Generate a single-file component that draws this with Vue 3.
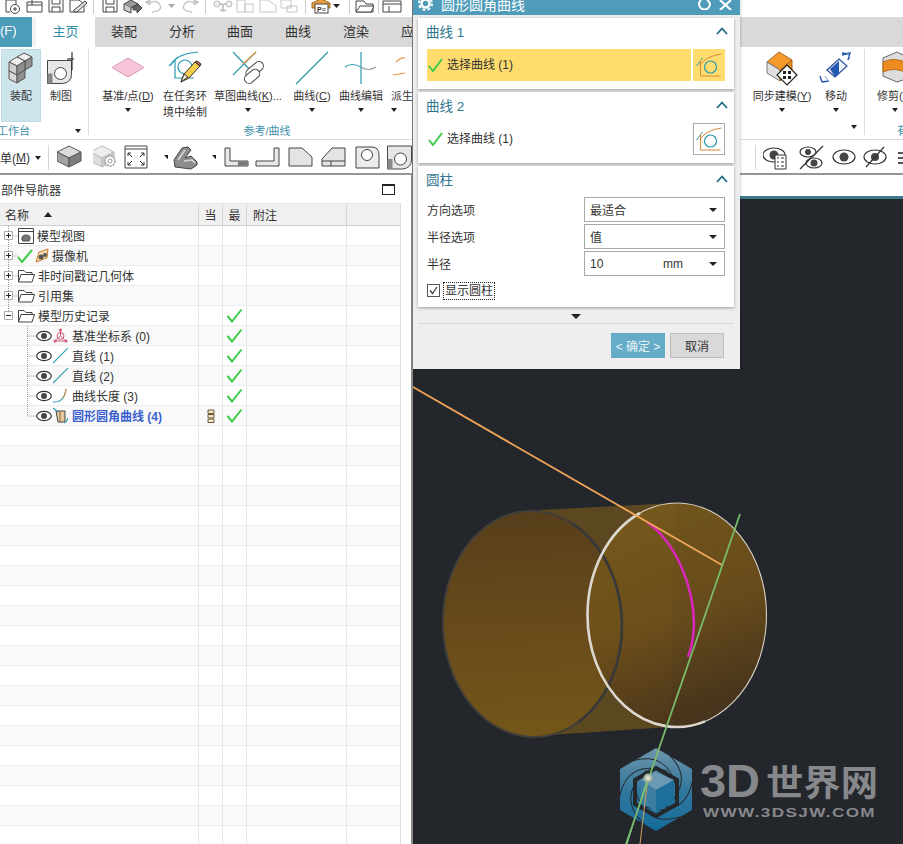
<script setup>
const s = (d, fill = 'none', stroke = '#444', w = 1) =>
  `<path d="${d}" fill="${fill}" stroke="${stroke}" stroke-width="${w}"/>`

const cubeIcon = (cx, cy, l, r, t, st = '#555') =>
  s(`M${cx} ${cy - 10}l12 6-12 6-12-6z`, t, st) +
  s(`M${cx - 12} ${cy - 4}l12 6v9l-12-6z`, l, st) +
  s(`M${cx + 12} ${cy - 4}l-12 6v9l12-6z`, r, st)

const sketchIcon = (ox, oy, teal = '#2a9bb0', orange = '#d98a3a') =>
  s(`M${ox + 3} ${oy + 12}Q${ox + 9} ${oy + 2} ${ox + 25} ${oy}`, 'none', orange, 1) +
  s(`M${ox} ${oy + 12}L${ox + 6} ${oy + 4}`, 'none', teal, 1) +
  s(`M${ox + 4} ${oy + 6}V${oy + 22}H${ox + 24}`, 'none', orange, 1) +
  `<circle cx="${ox + 14}" cy="${oy + 13}" r="6" fill="none" stroke="${teal}" stroke-width="1.2"/>`

const eye = (cx, cy, rx = 11, ry = 7, r = 4) =>
  `<ellipse cx="${cx}" cy="${cy}" rx="${rx}" ry="${ry}" fill="#fff" stroke="#333" stroke-width="1.2"/><circle cx="${cx}" cy="${cy}" r="${r}" fill="#444"/>`

const drawingIcon = (x, y) =>
  s(`M${x} ${y}H${x + 24}V${y + 14}Q${x + 24} ${y + 22} ${x + 15} ${y + 23}H${x}Z`, '#e6e6e6', '#444') +
  `<rect x="${x}" y="${y + 13}" width="5" height="10" fill="#888"/><circle cx="${x + 13}" cy="${y + 13}" r="6" fill="#fff" stroke="#444"/>`

const qatIcons = [
  { c: 13, svg: s('M6 2H16V9M6 2V14H10', 'none') + '<circle cx="15" cy="11" r="4.5" fill="#fff" stroke="#444"/>' + s('M13 11h4M15 9v4') },
  { c: 33, svg: s('M5 4H20V14H5ZM5 7H20M10 2V7') },
  { c: 56, svg: s('M5 1H19V14H5ZM8 1V6H16V1M8 14V9H16V14') },
  { c: 78, svg: s('M5 2H14L19 6V14H5Z') + s('M9 12L20 3l2 2-10 9H9Z', '#ddd') },
  { c: 94, sep: true },
  { c: 106, svg: s('M5 1H19V14H5ZM8 1V6H16V1M8 14V9H16V14') },
  { c: 133, svg: s('M4 6L11 2l7 4-7 4z', '#999') + s('M4 6v6l7 3V10M18 6v4', '#ccc') + s('M13 8h4V5l5 5-5 5v-3h-4z', '#666') },
  { c: 155, svg: s('M7 5Q15 1 18 7T10 14', 'none', '#c6c6c6', 1.4) + s('M3 4l5-2v5z', '#c6c6c6', '#c6c6c6') },
  { c: 173, svg: '<path d="M7 6h7l-3.500 4z" fill="#aaa"/>', w: 12 },
  { c: 191, svg: s('M17 5Q9 1 6 7T14 14', 'none', '#c6c6c6', 1.4) + s('M21 4l-5-2v5z', '#c6c6c6', '#c6c6c6') },
  { c: 206, sep: true },
  { c: 220, svg: s('M12 7L6 4M12 7l6-3M12 7v6M9 12l3 1 3-1', 'none', '#bbb', 1.5) + '<circle cx="6" cy="6" r="3" fill="#eee" stroke="#bbb"/><circle cx="18" cy="6" r="3" fill="#eee" stroke="#bbb"/>' },
  { c: 245, svg: s('M4 2H12V14H4ZM12 6H20V14H12Z', '#fff', '#c4c4c4') },
  { c: 268, svg: s('M4 2H12L20 8V14H4Z', '#fff', '#c4c4c4') },
  { c: 292, svg: s('M4 2H14V10H4ZM10 8H20V14H10Z', '#fff', '#c4c4c4') },
  { c: 304, sep: true },
  { c: 321, svg: s('M3 5L12 1l9 4v5H3Z', '#f0a03c', '#a06a28') + '<rect x="6" y="6" width="13" height="9" fill="#fff" stroke="#444"/><text x="8" y="13.500" font-size="7" font-family="Liberation Sans" font-weight="700" fill="#333">P≡</text>' },
  { c: 338, svg: '<path d="M8 6h7l-3.500 4z" fill="#222"/>', w: 12 },
  { c: 349, sep: true },
  { c: 363, svg: s('M4 3H12L14 6H21V14H4Z') + s('M4 14L8 8H22L19 14Z', '#fff') },
  { c: 379, sep: true },
  { c: 392, svg: s('M3 3H21V14H3ZM3 6H21M9 8v6', '#fff') }
]

const toolIcons = [
  { c: 73, svg: cubeIcon(12, 11, '#a2a2a2', '#7d7d7d', '#dcdcdc') },
  { c: 105, svg: cubeIcon(9, 11, '#dddddd', '#cccccc', '#eeeeee', '#bbb') + '<circle cx="17" cy="16" r="5" fill="#fff" stroke="#999" stroke-width="1.500" stroke-dasharray="2 1"/><circle cx="17" cy="16" r="2" fill="#fff" stroke="#999"/>' },
  { c: 139, svg: s('M1 1H23V23H1ZM1 4H23') + s('M4 8l4 4M4 8h3M4 8v3M20 8l-4 4M20 8h-3M20 8v3M4 20l4-4M4 20h3M4 20v-3M20 20l-4-4M20 20h-3M20 20v-3', 'none', '#333') },
  { c: 162, svg: '<path d="M8 10h7l-3.500 4z" fill="#222"/>', w: 12 },
  { c: 185, svg: s('M1 15L9 3l6-1 3 3-6 8 6-2 6 6v3l-6 4-16-2Z', '#8c8c8c', '#444') + s('M5 15L12 5M11 16l8-1 3 3', 'none', '#d8d8d8', 1.6) },
  { c: 209, svg: '<path d="M8 10h7l-3.500 4z" fill="#222"/>', w: 12 },
  { c: 235, svg: s('M1 3H6V16H24V21H1Z', '#e8e8e8') + '<rect x="14" y="16.500" width="9.500" height="4" fill="#777"/>' },
  { c: 267, svg: s('M1 16H19V3H24V21H1Z', '#e8e8e8') },
  { c: 301, svg: s('M1 3H14L24 12V21H1Z', '#e4e4e4') },
  { c: 333, svg: s('M1 21V14L11 3H24V21ZM1 16H24M10 16V21', '#e4e4e4') },
  { c: 368, svg: s('M1 2H17Q24 2 24 10V23H1Z', '#ececec') + '<circle cx="12" cy="10" r="5.500" fill="#fff" stroke="#444"/>' },
  { c: 400, svg: drawingIcon(0.5, 1), w: 26 },
  { c: 776, svg: eye(11, 10, 11, 7, 4.500) + s('M12 10H23V24H12Z', '#fff', '#333') + s('M14 13h2M18 13h3M14 17h2M18 17h3M14 21h2M18 21h3', 'none', '#333') },
  { c: 808, svg: eye(9, 7, 8, 5, 3) + eye(15, 18, 8, 5, 3.500) + s('M1 24L24 1', 'none', '#333', 1.2) },
  { c: 842, svg: eye(12, 12, 11, 7, 4.500) },
  { c: 874, svg: eye(12, 12, 11, 7, 4) + s('M3 22L21 2', 'none', '#333', 1.2) },
  { c: 900, svg: s('M0 8H12M0 13H12M0 18H12', 'none', '#555', 2), w: 10 }
]

const withWidths = (items, start = 0) =>
  items.map((it, i) => {
    const prev = i === 0 ? start : (items[i - 1].c + it.c) / 2
    const next = i === items.length - 1 ? it.c + (it.c - prev) : (it.c + items[i + 1].c) / 2
    return { ...it, width: next - prev }
  })
const qatSlots = withWidths(qatIcons)
const toolLeft = withWidths(toolIcons.slice(0, 12), 49)
const toolRight = withWidths(toolIcons.slice(12), 753)

const tabs = ['装配', '分析', '曲面', '曲线', '渲染']

const icons = {
  assembly: { box: '0 50 40 36', svg:
    s('M16 57l7-4 8 4-7 4z', '#eeeeee', '#555') + s('M24 61l7-4v9l-7 4z', '#8f8f8f', '#555') +
    s('M8 62l8-5 8 4-8 5z', '#eeeeee', '#555') + s('M8 62l8 4v9l-8-4z', '#cfcfcf', '#555') + s('M16 66l8-5v9l-8 5z', '#8f8f8f', '#555') +
    s('M8 71l8 4v8l-8-4z', '#d8d8d8', '#555') + s('M16 75l8-5v8l-8 5z', '#8f8f8f', '#555') },
  drawing: { box: '40 50 40 36', svg:
    drawingIcon(46.500, 60.500) + s('M71 52V70', 'none', '#333', 1.2) + s('M66 59H73', 'none', '#333', 1.2) },
  datum: { box: '110 50 36 36', svg: s('M112 67.500L128 58l16 9.500-16 9.500Z', '#f7c5da', '#d99ab6') },
  task: { box: '165 50 40 36', svg:
    s('M171 65Q176 54 198 52', 'none', '#2a9bb0', 1.2) + s('M169 66L178 57M175 59V78H194', 'none', '#2a9bb0', 1.2) +
    '<circle cx="185" cy="67" r="7" fill="none" stroke="#2a9bb0" stroke-width="1.200"/>' +
    s('M181 82l3-8 11-12 5 4-11 12z', '#f5cc4e', '#333') + s('M195 62l2-1 4 3-1 2z', '#d85a5a', '#333') + s('M181 82l3-8 4 3z', '#f6e7c8', '#333') },
  sketch: { box: '230 50 36 36', svg:
    s('M233 52L254 74M233 75L256 52', 'none', '#2a9bb0', 1.2) + s('M243 64L256 52', 'none', '#e0953f', 1.4) +
    '<rect x="245" y="65" width="20" height="9" rx="4.500" transform="rotate(-40 255 70)" fill="#fff" stroke="#444"/><rect x="244" y="72" width="17" height="9" rx="4.500" transform="rotate(-40 252 77)" fill="#fff" stroke="#444"/>' },
  curve: { box: '294 50 36 36', svg: s('M296 84L328 52', 'none', '#2a9bb0', 1.2) },
  edit: { box: '343 50 36 36', svg: s('M361 52V84', 'none', '#2a9bb0', 1.2) + s('M345 67Q352 62 361 67', 'none', '#2a9bb0', 1.2) + s('M361 67Q368 72 376 67', 'none', '#999', 1.2) },
  derive: { box: '400 50 20 36', svg: s('M405 62Q410 57 414 58', 'none', '#e0953f', 1.2) + s('M402 75L414 73', 'none', '#e0953f', 1.2) },
  sync: { box: '764 50 36 36', svg:
    s('M767 62l12-10 13 8-12 10z', '#f39a2a', '#a8641e') + s('M767 62l13 8v11l-13-8z', '#e0e0e0', '#777') + s('M780 70l12-10v11l-12 10z', '#ed8a1d', '#a8641e') +
    s('M787 65l10 10-10 10-10-10z', '#fff', '#222', 1.2) + '<path d="M783 71h3v3h-3zM788 71h3v3h-3zM783 76h3v3h-3zM788 76h3v3h-3z" fill="#222"/>' },
  move: { box: '818 50 36 36', svg:
    s('M827 70l12-11 8 7-12 11z', '#eef3fb', '#2a4f9c', 1.2) + s('M830 69l9-8v13l-4 3z', '#2458b2', 'none') +
    s('M842 55l8-2-2 7M848 54l-6-1', 'none', '#2458b2', 1.4) + s('M822 82l-2-6M822 82l7-1', 'none', '#2458b2', 1.4) + s('M847 52l3 7M825 76l4 6', 'none', '#7f9fd2', 1) },
  trim: { box: '875 50 36 36', svg:
    s('M881 58l14-6 12 6v20l-12 4-14-6Z', '#ddd', '#666') + s('M881 62Q893 56 907 64V74Q893 66 881 72Z', '#ee8c20', '#b66c1e') }
}

const group1 = [
  { w: 40, icon: 'assembly', lines: ['装配'], active: true },
  { w: 40, icon: 'drawing', lines: ['制图'] }
]
const group2 = [
  { w: 62, icon: 'datum', lines: ['基准/点(', 'D', ')'], caret: true },
  { w: 52, icon: 'task', lines: ['在任务环'], second: '境中绘制' },
  { w: 74, icon: 'sketch', lines: ['草图曲线(', 'K', ')...'], caret: true },
  { w: 54, icon: 'curve', lines: ['曲线(', 'C', ')'], caret: true },
  { w: 44, icon: 'edit', lines: ['曲线编辑'], caret: true },
  { w: 40, icon: 'derive', lines: ['派生曲线'], caret: true, start: true }
]
const group3 = [
  { w: 64, icon: 'sync', lines: ['同步建模(', 'Y', ')'], caret: true },
  { w: 44, icon: 'move', lines: ['移动'], caret: true }
]
const group4 = [{ w: 44, icon: 'trim', lines: ['修剪(', 'T', ')'], caret: true }]

const rows = [
  { name: '模型视图', exp: '+', kind: 'view' },
  { name: '摄像机', exp: '+', kind: 'camera' },
  { name: '非时间戳记几何体', exp: '+', kind: 'folder' },
  { name: '引用集', exp: '+', kind: 'folder' },
  { name: '模型历史记录', exp: '-', kind: 'folder', ok: true },
  { name: '基准坐标系 (0)', kind: 'csys', ok: true },
  { name: '直线 (1)', kind: 'line', ok: true },
  { name: '直线 (2)', kind: 'line', ok: true },
  { name: '曲线长度 (3)', kind: 'length', ok: true },
  { name: '圆形圆角曲线 (4)', kind: 'fillet', ok: true, current: true }
]
const blankRows = Array.from({ length: 21 }, (_, i) => i)

const treeIcons = {
  view: { w: 16, svg: s('M0.500 0.500H15.500V15.500H0.500ZM0.500 3.500H15.500') + s('M4 12Q3 7 8 7t4 4l-1 2H5Z', '#777', '#555') },
  camera: { w: 14, svg: s('M1 14L4 4 13 1 12 10Z', '#f3d7ae', '#c77f2c') + '<circle cx="6" cy="9" r="2.500" fill="#555"/><circle cx="10" cy="7" r="2" fill="#555"/>' },
  folder: { w: 17, svg: s('M0.500 14V2.500H6L8 4.500H14V6.500M0.500 14L3 6.500H16.500L14 14Z', '#fff', '#444') },
  csys: { w: 15, svg: s('M7.500 8V2M7.500 8L2 13M7.500 8L13 13M3 13H12', 'none', '#d25a78', 1) + '<circle cx="7.500" cy="8" r="3.500" fill="none" stroke="#d25a78"/><circle cx="7.500" cy="2" r="1.500" fill="#d25a78"/><circle cx="2" cy="13" r="1.500" fill="#d25a78"/><circle cx="13" cy="13" r="1.500" fill="#d25a78"/>' },
  line: { w: 15, svg: s('M0 15L15 0', 'none', '#2a9bb0', 1.1) },
  length: { w: 15, svg: s('M0 14Q11 15 13 1', 'none', '#2a9bb0', 1.1) + s('M13 1Q13 6 10 10', 'none', '#d98a3a', 1.1) },
  fillet: { w: 15, svg: s('M3 3H12V14H5Z', '#eac9a0', '#444') + s('M0 0L5 4M11 15Q14 14 15 10', 'none', '#2a9bb0', 1.1) + s('M7 3V14', 'none', '#8a6a3a') }
}
</script>

<template>
  <div class="app">
    <div class="qat">
      <template v-for="(it, i) in qatSlots" :key="i">
        <div class="qat-slot" :style="{ width: it.width + 'px' }">
          <span v-if="it.sep" class="qat-sep"></span>
          <svg v-else class="qat-icon" width="24" height="16" viewBox="0 0 24 16" v-html="it.svg"></svg>
        </div>
      </template>
    </div>

    <div class="tabs">
      <div class="file-tab">(F)</div>
      <div class="tab-gap"></div>
      <div class="tab tab-home">主页</div>
      <div v-for="t in tabs" :key="t" class="tab">{{ t }}</div>
      <div class="tab tab-last">应用模块</div>
    </div>

    <div class="ribbon">
      <section class="group g1">
        <div class="group-items">
          <div v-for="it in group1" :key="it.icon" class="r-item" :class="{ active: it.active }" :style="{ width: it.w + 'px' }">
            <svg class="r-icon" :width="icons[it.icon].box.split(' ')[2]" height="36" :viewBox="icons[it.icon].box" v-html="icons[it.icon].svg"></svg>
            <div class="r-label">{{ it.lines[0] }}</div>
          </div>
        </div>
        <div class="group-title left">工作台<span class="g-caret"></span></div>
      </section>

      <section class="group g2">
        <div class="group-items">
          <div v-for="it in group2" :key="it.icon" class="r-item" :class="{ 'r-start': it.start }" :style="{ width: it.w + 'px' }">
            <svg class="r-icon" :width="icons[it.icon].box.split(' ')[2]" height="36" :viewBox="icons[it.icon].box" v-html="icons[it.icon].svg"></svg>
            <div class="r-label">{{ it.lines[0] }}<u v-if="it.lines[1]">{{ it.lines[1] }}</u>{{ it.lines[2] }}</div>
            <div v-if="it.second" class="r-label">{{ it.second }}</div>
            <div v-if="it.caret" class="r-caret"></div>
          </div>
        </div>
        <div class="group-title">参考/曲线</div>
      </section>

      <section class="group g3">
        <div class="group-items">
          <div v-for="it in group3" :key="it.icon" class="r-item" :style="{ width: it.w + 'px' }">
            <svg class="r-icon" :width="icons[it.icon].box.split(' ')[2]" height="36" :viewBox="icons[it.icon].box" v-html="icons[it.icon].svg"></svg>
            <div class="r-label">{{ it.lines[0] }}<u v-if="it.lines[1]">{{ it.lines[1] }}</u>{{ it.lines[2] }}</div>
            <div v-if="it.caret" class="r-caret"></div>
          </div>
        </div>
        <div class="group-title end"><span class="g-caret"></span></div>
      </section>

      <section class="group g4">
        <div class="group-items">
          <div v-for="it in group4" :key="it.icon" class="r-item" :style="{ width: it.w + 'px' }">
            <svg class="r-icon" :width="icons[it.icon].box.split(' ')[2]" height="36" :viewBox="icons[it.icon].box" v-html="icons[it.icon].svg"></svg>
            <div class="r-label">{{ it.lines[0] }}<u>{{ it.lines[1] }}</u>{{ it.lines[2] }}</div>
            <div class="r-caret"></div>
          </div>
        </div>
        <div class="group-title left-g4">有关</div>
      </section>
    </div>

    <div class="toolbar">
      <div class="menu-cell">单(<u>M</u>)<span class="t-caret"></span></div>
      <span class="t-sep"></span>
      <div v-for="(it, i) in toolLeft" :key="i" class="t-slot" :style="{ width: it.width + 'px' }">
        <svg :width="it.w || 25" height="25" :viewBox="`0 0 ${it.w || 25} 25`" v-html="it.svg"></svg>
      </div>
      <div class="t-hidden"></div>
      <span class="t-sep"></span>
      <div v-for="(it, i) in toolRight" :key="'r' + i" class="t-slot" :style="{ width: it.width + 'px' }">
        <svg :width="it.w || 25" height="25" :viewBox="`0 0 ${it.w || 25} 25`" v-html="it.svg"></svg>
      </div>
    </div>

    <div class="main">
      <aside class="nav">
        <div class="nav-head">
          <span>部件导航器</span>
          <span class="maximize"></span>
        </div>
        <div class="table">
          <div class="t-row head">
            <div class="cell name">名称<span class="sort"></span></div>
            <div class="cell ctr">当</div>
            <div class="cell ctr">最</div>
            <div class="cell note">附注</div>
            <div class="cell"></div>
          </div>
          <svg class="connectors" width="60" height="200" viewBox="0 0 60 200">
            <path d="M8.500 0V90M8.500 10H18M8.500 30H18M8.500 50H18M8.500 70H18M27.500 100V190M27.500 110H38M27.500 130H38M27.500 150H38M27.500 170H38M27.500 190H38" fill="none" stroke="#999" stroke-dasharray="1 1"/>
          </svg>
          <div v-for="r in rows" :key="r.name" class="t-row">
            <div class="cell name tree" :class="{ child: !r.exp, current: r.current }">
              <span v-if="r.exp" class="expander">
                <svg width="9" height="9" viewBox="0 0 9 9"><path d="M.5.500h8v8h-8z" fill="#fff" stroke="#aaa"/><path :d="r.exp === '+' ? 'M2 4.500h5M4.500 2v5' : 'M2 4.500h5'" stroke="#222"/></svg>
              </span>
              <svg v-if="!r.exp" class="eye" width="16" height="12" viewBox="0 0 16 12"><ellipse cx="8" cy="6" rx="7.300" ry="4.600" fill="#fff" stroke="#333" stroke-width="1.200"/><circle cx="8" cy="6" r="3" fill="#444"/></svg>
              <svg v-if="r.kind === 'camera'" class="mini-check" width="16" height="14" viewBox="0 0 16 14"><path d="M1 8l4 5L15 1" fill="none" stroke="#3ecb4a" stroke-width="2"/></svg>
              <svg class="t-icon" :width="treeIcons[r.kind].w" height="16" :viewBox="`0 0 ${treeIcons[r.kind].w} 16`" v-html="treeIcons[r.kind].svg"></svg>
              <span class="t-text">{{ r.name }}</span>
            </div>
            <div class="cell ctr">
              <svg v-if="r.current" width="8" height="14" viewBox="0 0 8 14"><path d="M1 1h6v3.500H1zM1 5.500h6V9H1zM1 10h6v3.500H1z" fill="#f5e6c8" stroke="#6b5a3a"/></svg>
            </div>
            <div class="cell ctr">
              <svg v-if="r.ok" width="17" height="15" viewBox="0 0 17 15"><path d="M1.500 8l4.500 5.500L15.500 1.500" fill="none" stroke="#3ecb4a" stroke-width="2"/></svg>
            </div>
            <div class="cell"></div>
            <div class="cell"></div>
          </div>
          <div v-for="i in blankRows" :key="'b' + i" class="t-row">
            <div class="cell"></div>
            <div class="cell"></div>
            <div class="cell"></div>
            <div class="cell"></div>
            <div class="cell"></div>
          </div>
        </div>
      </aside>

      <div class="viewport-col">
        <div class="vp-tabs"></div>
        <div class="viewport">
          <svg width="490" height="645" viewBox="413 199 490 645">
            <defs>
              <linearGradient id="leftFill" x1="0" y1="0" x2="0" y2="1">
                <stop offset="0" stop-color="#573f1c"/>
                <stop offset="0.600" stop-color="#6a4d1a"/>
                <stop offset="1" stop-color="#725619"/>
              </linearGradient>
              <linearGradient id="rightFill" x1="0.350" y1="0" x2="0.650" y2="1">
                <stop offset="0" stop-color="#76591b"/>
                <stop offset="0.500" stop-color="#6d4f1a"/>
                <stop offset="0.900" stop-color="#4d371b"/>
                <stop offset="1" stop-color="#49351c"/>
              </linearGradient>
              <linearGradient id="hexFill" x1="0" y1="0" x2="0" y2="1">
                <stop offset="0" stop-color="#6f95ab"/>
                <stop offset="0.500" stop-color="#33789e"/>
                <stop offset="1" stop-color="#156b9a"/>
              </linearGradient>
              <radialGradient id="ball">
                <stop offset="0" stop-color="#f2f2df"/>
                <stop offset="1" stop-color="#8fa88e"/>
              </radialGradient>
            </defs>
            <path d="M540 510L675 503L670 727L550 735Z" fill="#5c4820"/>
            <ellipse cx="532.500" cy="624" rx="89.500" ry="113" fill="url(#leftFill)" transform="rotate(-2 532 624)"/>
            <ellipse cx="677" cy="615" rx="89.500" ry="112" fill="url(#rightFill)" fill-opacity="0.920" stroke="#d6d0c4" stroke-width="1.100"/>
            <g transform="rotate(-2 532 624)" fill="none" stroke="#423f3a">
              <ellipse cx="532.500" cy="624" rx="89.500" ry="113" stroke-width="2"/>
              <path d="M575 524.600A89.500 113 0 0 1 622 624A89.500 113 0 0 1 575 723.400" stroke="#38383a" stroke-width="2.600"/>
            </g>
            <path d="M640 513A89.500 112 0 0 0 587.500 615A89.500 112 0 0 0 705 721.400" fill="none" stroke="#dcd8d0" stroke-width="2.600"/>
            <path d="M647 522C675 542 694 585 694 625Q693 645 688 657" fill="none" stroke="#d826b8" stroke-width="2.600"/>
            <path d="M413 387L722 565" stroke="#f0a558" stroke-width="1.800"/>

            <path d="M656 748L692 769V810L656 831L620 810V769Z" fill="url(#hexFill)"/>
            <g fill="none" stroke="#24282c" stroke-width="1">
              <path d="M632 761Q668 750 677 790"/>
              <path d="M632 761Q668 750 677 790" transform="rotate(60 656 789)"/>
              <path d="M632 761Q668 750 677 790" transform="rotate(120 656 789)"/>
              <path d="M632 761Q668 750 677 790" transform="rotate(180 656 789)"/>
              <path d="M632 761Q668 750 677 790" transform="rotate(240 656 789)"/>
              <path d="M632 761Q668 750 677 790" transform="rotate(300 656 789)"/>
            </g>
            <path d="M656 768L677 780V804L656 816L635 804V780Z" fill="none" stroke="#24282c" stroke-width="4"/>
            <path d="M655 772L674 780L656 790L641 780Z" fill="#6c9ab5"/>
            <path d="M641 780L656 790V812L641 802Z" fill="#3d7ea0"/>
            <path d="M674 780L656 790V812L674 802Z" fill="#1f6f9b"/>
            <path d="M648 777L627 844" stroke="#84d5dc" stroke-width="1"/>
            <path d="M648 777L640 844" stroke="#d0a060" stroke-width="1"/>
            <path d="M740 514L626 844" stroke="#79bb69" stroke-width="1.800"/>
            <circle cx="648" cy="778" r="4.500" fill="url(#ball)"/>
            <text class="logo-3d" x="700" y="797" textLength="60" lengthAdjust="spacingAndGlyphs">3D</text>
            <text class="logo-cn" x="766" y="796" textLength="112" lengthAdjust="spacingAndGlyphs">世界网</text>
            <text class="logo-url" x="703" y="817" textLength="173" lengthAdjust="spacingAndGlyphs">WWW.3DSJW.COM</text>
          </svg>
        </div>
      </div>
    </div>

    <div class="dialog">
      <div class="d-title">
        <svg width="15" height="15" viewBox="0 0 15 15"><circle cx="7.500" cy="3.500" r="6.500" fill="none" stroke="#fff" stroke-width="2" stroke-dasharray="2.600 2.500"/><circle cx="7.500" cy="3.500" r="4" fill="none" stroke="#fff" stroke-width="2.600"/></svg>
        <span class="d-name">圆形圆角曲线</span>
        <svg class="d-reset" width="13" height="10" viewBox="0 0 13 10"><path d="M9 0Q12 2 12 4A5.500 5.500 0 0 1 1 4Q1 2 3 0" fill="none" stroke="#fff" stroke-width="2"/></svg>
        <svg class="d-close" width="13" height="10" viewBox="0 0 13 10"><path d="M1 0L6.500 5L12 0M1 10L6.500 5L12 10" fill="none" stroke="#fff" stroke-width="2.200"/></svg>
      </div>

      <section class="card">
        <header class="c-head">
          <span>曲线 1</span>
          <svg width="12" height="8" viewBox="0 0 12 8"><path d="M1 7L6 1.500 11 7" fill="none" stroke="#1d6a87" stroke-width="1.800"/></svg>
        </header>
        <div class="sel-row">
          <div class="sel-text yellow">
            <svg width="15" height="14" viewBox="0 0 15 14"><path d="M1 8l4 5L14 1" fill="none" stroke="#3ecb4a" stroke-width="2"/></svg>
            <span>选择曲线 (1)</span>
          </div>
          <div class="sel-btn yellow">
            <svg width="26" height="24" viewBox="0 0 26 24" v-html="sketchIcon(0.500, 1)"></svg>
          </div>
        </div>
      </section>

      <section class="card">
        <header class="c-head">
          <span>曲线 2</span>
          <svg width="12" height="8" viewBox="0 0 12 8"><path d="M1 7L6 1.500 11 7" fill="none" stroke="#1d6a87" stroke-width="1.800"/></svg>
        </header>
        <div class="sel-row">
          <div class="sel-text">
            <svg width="15" height="14" viewBox="0 0 15 14"><path d="M1 8l4 5L14 1" fill="none" stroke="#3ecb4a" stroke-width="2"/></svg>
            <span>选择曲线 (1)</span>
          </div>
          <div class="sel-btn outlined">
            <svg width="26" height="24" viewBox="0 0 26 24" v-html="sketchIcon(0.500, 1)"></svg>
          </div>
        </div>
      </section>

      <section class="card card-form">
        <header class="c-head">
          <span>圆柱</span>
          <svg width="12" height="8" viewBox="0 0 12 8"><path d="M1 7L6 1.500 11 7" fill="none" stroke="#1d6a87" stroke-width="1.800"/></svg>
        </header>
        <div class="form">
          <label>方向选项</label>
          <div class="combo"><span>最适合</span><i></i></div>
          <label>半径选项</label>
          <div class="combo"><span>值</span><i></i></div>
          <label>半径</label>
          <div class="combo"><span>10</span><em>mm</em><i></i></div>
        </div>
        <div class="check-row">
          <span class="checkbox">
            <svg width="11" height="11" viewBox="0 0 11 11"><path d="M2 5.500l2.500 3L9 2" fill="none" stroke="#333" stroke-width="1.200"/></svg>
          </span>
          <span class="check-label">显示圆柱</span>
        </div>
      </section>

      <div class="more"><span></span></div>
      <div class="d-foot">
        <button class="ok">&lt; 确定 &gt;</button>
        <button class="cancel">取消</button>
      </div>
    </div>
  </div>
</template>

<style>
html, body { margin: 0; background: #fff; overflow: hidden; }
</style>

<style scoped>
.app {
  position: relative;
  width: 903px;
  height: 844px;
  overflow: hidden;
  background: #fff;
  color: #333;
  font-family: "Liberation Sans", "Noto Sans CJK SC", sans-serif;
  font-size: 12px;
}
svg { display: block; flex: none; }

.qat { display: flex; height: 17px; overflow: hidden; background: #fff; }
.qat-slot { display: flex; justify-content: center; align-items: flex-end; height: 14px; flex: none; }
.qat-sep { width: 1px; height: 14px; background: #ccc; }

.tabs { display: flex; height: 30px; background: #d9d9d9; font-size: 13px; }
.file-tab { width: 32px; background: #4d9dba; color: #fff; line-height: 27px; text-align: right; padding-right: 22px; box-sizing: border-box; flex: none; white-space: nowrap; overflow: hidden; }
.tab-gap { width: 4px; background: #f3f3f3; flex: none; }
.tab { width: 58px; text-align: center; line-height: 29px; flex: none; color: #333; white-space: nowrap; }
.tab-home { width: 59px; background: #fff; color: #2e8aa6; }
.tab-last { text-align: left; padding-left: 16px; box-sizing: border-box; width: 100px; }

.ribbon { display: flex; height: 93px; box-sizing: border-box; border-bottom: 1px solid #dcdcdc; padding-top: 2px; background: #fff; }
.group { display: flex; flex-direction: column; flex: none; position: relative; }
.group-items { display: flex; height: 74px; }
.group-title { height: 16px; line-height: 16px; font-size: 11px; color: #3f93ad; text-align: center; }
.g1 { width: 88px; border-right: 1px solid #ddd; height: 86px; }
.g1 .group-items { padding-left: 1px; }
.g2 { width: 356px; padding-left: 8px; box-sizing: border-box; }
.g2 .group-title { margin-left: -8px; }
.g3 { margin-left: 305px; width: 114px; border-right: 1px solid #ddd; height: 86px; }
.g4 { padding-left: 8px; }
.left { text-align: left; color: #3f93ad; display: flex; justify-content: space-between; align-items: center; padding-right: 7px; margin-left: -3px; margin-top: 1px; }
.end { display: flex; justify-content: flex-end; align-items: center; padding-right: 7px; margin-top: 1px; }
.left-g4 { text-align: left; margin-left: 24px; white-space: nowrap; }
.g-caret { width: 0; height: 0; border: 3.500px solid transparent; border-top: 4px solid #222; border-bottom: 0; }

.r-item { display: flex; flex-direction: column; align-items: center; box-sizing: border-box; flex: none; }
.r-item.active { background: #cfe5ec; outline: 1px solid #bcdbe4; outline-offset: -1px; height: 73px; }
.r-item.r-start { align-items: flex-start; padding-left: 8px; }
.r-icon { margin-bottom: 2px; margin-top: 1px; }
.r-label { font-size: 11px; line-height: 16px; white-space: nowrap; color: #333; }
.r-caret { width: 0; height: 0; margin-top: 4px; border: 3.500px solid transparent; border-top: 4px solid #222; border-bottom: 0; }

.toolbar { display: flex; height: 35px; box-sizing: border-box; border-bottom: 2px solid #969696; align-items: center; background: #fff; padding-top: 2px; }
.menu-cell { width: 48px; flex: none; display: flex; align-items: center; font-size: 12px; white-space: pre; }
.t-caret { width: 0; height: 0; margin-left: 5px; border: 3.500px solid transparent; border-top: 4px solid #222; border-bottom: 0; }
.t-sep { width: 1px; height: 25px; background: #d6d6d6; flex: none; }
.t-slot { display: flex; justify-content: center; flex: none; }
.t-hidden { width: 339px; flex: none; }

.main { display: flex; height: 669px; }
.nav { width: 413px; box-sizing: border-box; border-right: 2px solid #8a8a8a; flex: none; background: #fff; }
.nav-head { height: 28px; display: flex; align-items: center; justify-content: space-between; padding: 1px 16px 0 1px; box-sizing: border-box; font-size: 12px; }
.maximize { width: 11px; height: 8px; border: 1px solid #222; border-top-width: 2px; }

.table { position: relative; width: 401px; border-top: 1px solid #e2e2e2; border-right: 1px solid #dcdcdc; box-sizing: border-box; }
.t-row { display: grid; grid-template-columns: 199px 24px 24px 100px 53px; height: 20px; box-sizing: border-box; border-bottom: 1px solid #ececec; background: #fff; }
.t-row.head { height: 22px; background: #f0f0f0; border-bottom: 1px solid #d0d0d0; }
.t-row:not(.head):nth-of-type(odd) { background: #f9f9f9; }
.cell { border-right: 1px solid #e6e6e6; display: flex; align-items: center; min-width: 0; white-space: nowrap; }
.head .cell { border-right-color: #d6d6d6; }
.cell:last-child { border-right: 0; }
.ctr { justify-content: center; }
.name { padding-left: 5px; }
.note { padding-left: 6px; }
.sort { width: 0; height: 0; margin-left: 15px; border: 4.500px solid transparent; border-bottom: 5px solid #222; border-top: 0; }
.tree { padding-left: 4px; }
.tree.child { padding-left: 36px; }
.expander { width: 14px; flex: none; background: transparent; position: relative; z-index: 1; }
.eye { background: #fff; position: relative; z-index: 1; }
.mini-check { margin-left: -1px; margin-right: 2px; }
.t-text { margin-left: 3px; }
.child .t-text { margin-left: 4px; }
.child .t-icon { margin-left: 1px; }
.current .t-text { color: #3a5fcd; font-weight: 700; }
.connectors { position: absolute; left: 0; top: 22px; pointer-events: none; }

.viewport-col { flex: 1; display: flex; flex-direction: column; }
.vp-tabs { height: 24px; box-sizing: border-box; background: #fff; flex: none; border-bottom: 3px solid #3c7a8c; }
.viewport { flex: 1; background: #23262b; overflow: hidden; }
.logo-3d { font: 700 46px "Liberation Sans", sans-serif; fill: #87888b; }
.logo-cn { font: 700 36px "Noto Sans CJK SC", sans-serif; fill: #87888b; }
.logo-url { font: 700 12.500px "Liberation Sans", sans-serif; fill: #87888b; letter-spacing: 1px; }

.dialog {
  position: absolute;
  left: 412px;
  top: 0;
  width: 328px;
  height: 369px;
  box-sizing: border-box;
  background: #eeeeee;
  border-left: 1px solid #777;
  box-shadow: 1px 0 2px rgba(0, 0, 0, .15);
  display: flex;
  flex-direction: column;
}
.d-title { height: 15px; flex: none; background: #4e9cb9; color: #fff; display: flex; align-items: flex-start; padding-left: 5px; overflow: hidden; }
.d-name { font-size: 14px; line-height: 10px; margin-left: 8px; flex: 1; }
.d-reset { margin-right: 8px; }
.d-close { margin-right: 8px; }

.card { margin: 3px 6px 0 5px; background: #fff; height: 71px; flex: none; box-shadow: 0 1px 3px rgba(0, 0, 0, .35); }
.card-form { height: 141px; }
.c-head { height: 28px; display: flex; align-items: center; justify-content: space-between; padding: 0 6px 3px 8px; box-sizing: border-box; color: #2f7590; font-size: 13.500px; }
.sel-row { display: flex; gap: 2px; margin: 3px 9px 0; height: 32px; }
.sel-text { flex: 1; display: flex; align-items: center; gap: 4px; padding-left: 1px; }
.sel-text span { margin-top: -3px; }
.sel-btn { width: 32px; box-sizing: border-box; display: flex; align-items: center; justify-content: center; flex: none; }
.yellow { background: #ffdc6e; }
.outlined { border: 1px solid #aaa; }

.form { display: grid; grid-template-columns: 1fr 141px; row-gap: 2px; margin: 3px 9px 0; align-items: center; }
.combo { height: 25px; box-sizing: border-box; border: 1px solid #a8a8a8; display: flex; align-items: center; padding: 0 7px 0 5px; color: #333; }
.combo span { flex: 1; }
.combo em { font-style: normal; margin-right: 26px; }
.combo i { width: 0; height: 0; border: 4px solid transparent; border-top: 4.500px solid #222; border-bottom: 0; }
.check-row { display: flex; align-items: center; gap: 4px; margin: 6px 9px 0; }
.checkbox { width: 13px; height: 13px; border: 1px solid #555; box-sizing: border-box; display: flex; align-items: center; justify-content: center; }
.check-label { outline: 1px dotted #222; padding: 0 1px; line-height: 16px; margin-top: 1px; }

.more { height: 17px; flex: none; margin: 0 6px 0 5px; display: flex; align-items: center; justify-content: center; border-bottom: 1px solid #d6d6d6; box-sizing: border-box; padding-top: 3px; }
.more span { width: 0; height: 0; margin-right: 1px; border: 5px solid transparent; border-top: 5px solid #222; border-bottom: 0; }
.d-foot { display: flex; justify-content: flex-end; gap: 5px; padding: 9px 16px 0 0; }
button { height: 25px; box-sizing: border-box; font: 12px "Liberation Sans", "Noto Sans CJK SC", sans-serif; padding: 0; border: 0; }
.ok { width: 54px; background: #66abc8; color: #e6f3f7; }
.cancel { width: 54px; background: #d9d9d9; border: 1px solid #bdbdbd; color: #333; }
</style>
